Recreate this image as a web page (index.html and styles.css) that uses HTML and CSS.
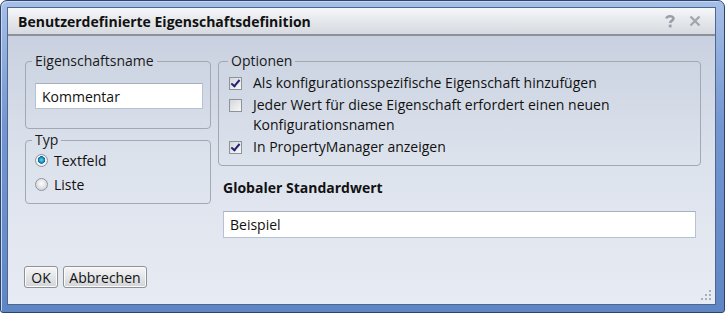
FILE: index.html
```html
<!DOCTYPE html>
<html lang="de">
  <head>
    <meta charset="UTF-8" />
    <title>Benutzerdefinierte Eigenschaftsdefinition</title>
    <link rel="stylesheet" href="styles.css">
  </head>
  <body>
    <div class="window">
      <div class="inner">
        <div class="titlebar">
          <span class="title">Benutzerdefinierte Eigenschaftsdefinition</span>
          <span class="controls">
            <svg width="12" height="14" viewBox="0 0 12 14">
              <path d="M2.5 4.5 C2.5 1.5 9.5 1.5 9.5 4.5 C9.5 6.5 6.2 6.8 6.2 9" fill="none" stroke="#9a9ea6" stroke-width="2.6"/>
              <rect x="4.8" y="10.6" width="2.8" height="2.8" fill="#9a9ea6"/>
            </svg>
            <svg width="14" height="14" viewBox="0 0 14 14">
              <path d="M2.5 2.5 L11.5 11.5 M11.5 2.5 L2.5 11.5" stroke="#a3a7ae" stroke-width="2.4"/>
            </svg>
          </span>
        </div>
        <div class="content">
          <div class="columns">
            <div class="left">
              <fieldset class="group name-group">
                <legend>Eigenschaftsname</legend>
                <input class="field name-field" type="text" value="Kommentar">
              </fieldset>
              <fieldset class="group type-group">
                <legend>Typ</legend>
                <label class="row"><span class="radio checked"></span>Textfeld</label>
                <label class="row"><span class="radio"></span>Liste</label>
              </fieldset>
            </div>
            <div class="right">
              <fieldset class="group options-group">
                <legend>Optionen</legend>
                <label class="option"><span class="check checked"></span><span>Als konfigurationsspezifische Eigenschaft hinzufügen</span></label>
                <label class="option"><span class="check"></span><span>Jeder Wert für diese Eigenschaft erfordert einen neuen Konfigurationsnamen</span></label>
                <label class="option"><span class="check checked"></span><span>In PropertyManager anzeigen</span></label>
              </fieldset>
              <div class="default-label">Globaler Standardwert</div>
              <input class="field default-field" type="text" value="Beispiel">
            </div>
          </div>
          <div class="buttons">
            <button class="btn ok">OK</button>
            <button class="btn cancel">Abbrechen</button>
          </div>
          <svg class="grip" width="12" height="12" viewBox="0 0 12 12">
            <g fill="#a9b0bc">
              <rect x="9" y="1" width="2" height="2"/>
              <rect x="9" y="5" width="2" height="2"/><rect x="5" y="5" width="2" height="2"/>
              <rect x="9" y="9" width="2" height="2"/><rect x="5" y="9" width="2" height="2"/><rect x="1" y="9" width="2" height="2"/>
            </g>
          </svg>
        </div>
      </div>
    </div>
  </body>
</html>
```

FILE: styles.css
```css
html, body {
  margin: 0;
  padding: 0;
}
body {
  width: 725px;
  height: 313px;
  font-family: "Open Sans", "DejaVu Sans", sans-serif;
  font-size: 14px;
  color: #111;
  background: #fff;
}
.window {
  box-sizing: border-box;
  width: 725px;
  height: 313px;
  padding: 6px 8px 7px 6px;
  border: 1px solid #2d4470;
  border-radius: 7px 7px 3px 3px;
  background: linear-gradient(to bottom, #a6bfe6, #7396d0 40%, #5f86c4);
  box-shadow: inset 1px 1px 0 #c9d9f2;
}
.inner {
  box-sizing: border-box;
  height: 100%;
  border: 1px solid #4e6690;
  display: flex;
  flex-direction: column;
}
.titlebar {
  height: 26px;
  display: flex;
  align-items: center;
  justify-content: space-between;
  padding: 0 13px 0 10px;
  background: linear-gradient(to bottom, #f6f7f9, #e3e6ea 55%, #d6dae0);
  border-bottom: 2px solid #8b9099;
}
.title {
  font-weight: bold;
  font-size: 14px;
  color: #111;
}
.controls {
  display: flex;
  gap: 12px;
  align-items: center;
}
.content {
  flex: 1;
  position: relative;
  padding: 17px 14px 0 17px;
  background: linear-gradient(to bottom, #c9d1e0, #dce2ec 45%, #e7ebf3);
  display: flex;
  flex-direction: column;
}
.columns {
  display: flex;
  gap: 7px;
}
.left {
  width: 186px;
  display: flex;
  flex-direction: column;
  gap: 3px;
}
.right {
  flex: 1;
  display: flex;
  flex-direction: column;
}
.group {
  margin: 0;
  padding: 0 8px 0 6px;
  border: 1px solid #a3a9b3;
  border-radius: 4px;
  min-width: 0;
}
.group legend {
  padding: 0 3px;
  line-height: 16px;
  font-size: 14px;
  color: #1a1a1a;
}
.field {
  box-sizing: border-box;
  height: 26px;
  border: 1px solid #b6c2d2;
  border-top-color: #a8b0bd;
  background: #fff;
  font-family: inherit;
  font-size: 14px;
  color: #111;
  padding: 0 6px;
  outline: none;
}
.name-field {
  width: 168px;
  margin: 14px 0 19px 3px;
}
.type-group {
  padding-bottom: 7px;
}
.row {
  display: flex;
  align-items: center;
  height: 24px;
  font-size: 14px;
  padding-left: 3px;
}
.radio {
  box-sizing: border-box;
  width: 13px;
  height: 13px;
  border-radius: 50%;
  border: 1px solid #8f959d;
  background: radial-gradient(circle at 50% 40%, #fdfdfd, #d6d8db 70%, #c2c5c9);
  margin-right: 6px;
}
.radio.checked {
  background: radial-gradient(circle at 50% 45%, #6fd3f2 0, #1a8fc4 2.5px, #0b5f8e 3.5px, #f4f5f6 4px, #dfe1e4 100%);
}
.options-group {
  padding: 0 8px 8px 9px;
}
.option {
  display: flex;
  align-items: flex-start;
  font-size: 14px;
  line-height: 20px;
  margin-top: 2px;
}
.option:first-of-type {
  margin-top: 4px;
}
.check {
  box-sizing: border-box;
  flex: none;
  width: 13px;
  height: 13px;
  margin: 4px 11px 0 1px;
  border: 1px solid #8d939b;
  background: linear-gradient(135deg, #d4d6da, #f8f8f9);
  position: relative;
}
.check.checked::after {
  content: "";
  position: absolute;
  left: 3px;
  top: 0px;
  width: 3px;
  height: 7px;
  border: solid #22226e;
  border-width: 0 2px 2px 0;
  transform: rotate(40deg);
}
.option span:last-child {
  max-width: 420px;
}
.default-label {
  font-weight: bold;
  font-size: 14px;
  margin: 13px 0 0 5px;
  line-height: 18px;
}
.default-field {
  width: 473px;
  height: 27px;
  margin: 14px 0 0 5px;
}
.buttons {
  margin-top: auto;
  margin-bottom: 16px;
  display: flex;
  gap: 5px;
  margin-left: -1px;
}
.btn {
  height: 22px;
  padding: 0 3px;
  font-family: inherit;
  font-size: 14px;
  color: #111;
  border: 1px solid #8e9196;
  border-radius: 3px;
  background: linear-gradient(to bottom, #f6f6f7, #e4e5e7 50%, #d2d4d8);
  box-shadow: inset 0 0 0 1px #fbfbfc;
}
.ok {
  width: 34px;
}
.cancel {
  width: 84px;
}
.grip {
  position: absolute;
  right: 3px;
  bottom: 3px;
}
```
